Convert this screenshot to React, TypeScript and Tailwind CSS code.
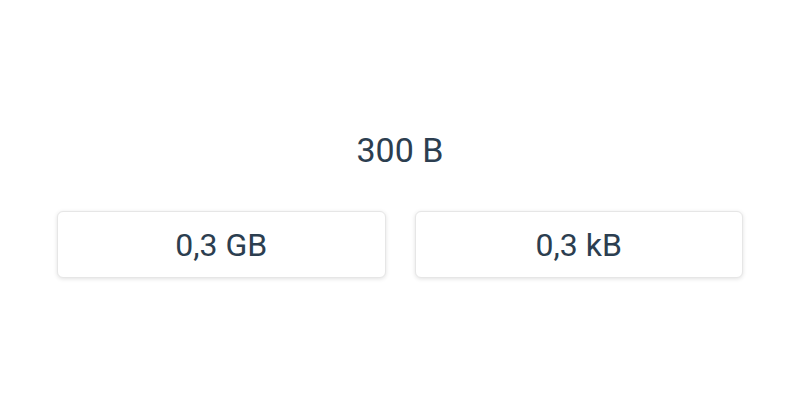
import React from "react";

export default function App() {
  return (
    <div className="w-[800px] h-[400px] bg-white flex flex-col items-center text-[#2c3e50]" style={{ fontFamily: "Roboto, sans-serif" }}>
      <div className="mt-[126px] text-[34px] leading-[48px]">300 B</div>
      <div className="mt-[37px] w-[686px] flex gap-[29px]">
        <button className="flex-1 h-[67px] rounded-[6px] bg-white border border-[#e6e6e6] shadow-[0_1px_4px_rgba(0,0,0,0.12)] text-[32px] text-[#2c3e50]">0,3 GB</button>
        <button className="flex-1 h-[67px] rounded-[6px] bg-white border border-[#e6e6e6] shadow-[0_1px_4px_rgba(0,0,0,0.12)] text-[32px] text-[#2c3e50]">0,3 kB</button>
      </div>
    </div>
  );
}
